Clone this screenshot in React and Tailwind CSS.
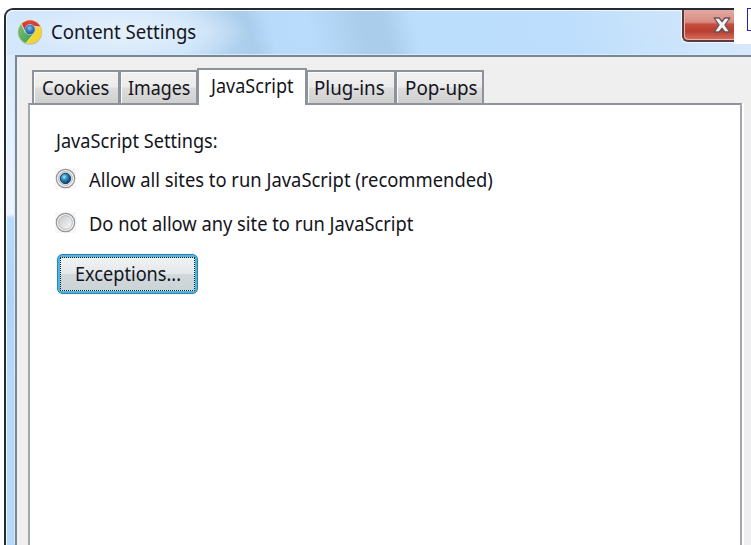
const tabFace = "bg-[linear-gradient(180deg,#f2f2f2_0%,#ebebeb_48%,#dddddd_52%,#cfcfcf_100%)]";

function Text({ children, className }) {
  return <span className={`inline-block origin-left whitespace-nowrap ${className}`}>{children}</span>;
}

function Tab({ children, className, textClass }) {
  return (
    <div className={`flex h-[33px] shrink-0 items-center border-2 border-b-0 border-[#8e929a] shadow-[inset_1px_1px_0_#fafafa] ${tabFace} ${className}`}>
      <Text className={textClass}>{children}</Text>
    </div>
  );
}

function ChromeLogo() {
  return (
    <svg className="block h-[26px] w-[26px] shrink-0" viewBox="0 0 26 26">
      <defs>
        <radialGradient id="blue" cx="0.45" cy="0.35" r="0.65">
          <stop offset="0" stopColor="#8dc2ef" />
          <stop offset="0.5" stopColor="#397fc5" />
          <stop offset="1" stopColor="#21548c" />
        </radialGradient>
        <linearGradient id="red" x1="0" y1="0" x2="0" y2="1">
          <stop offset="0" stopColor="#e5493f" />
          <stop offset="1" stopColor="#c3221d" />
        </linearGradient>
        <linearGradient id="green" x1="0" y1="0" x2="1" y2="1">
          <stop offset="0" stopColor="#7cc17b" />
          <stop offset="1" stopColor="#3c9c45" />
        </linearGradient>
      </defs>
      <circle cx="13" cy="13.5" r="12.2" fill="#8c9a91" opacity="0.55" />
      <circle cx="13" cy="13" r="11.7" fill="#f4d42d" />
      <path d="M4.6 4.9A11.7 11.7 0 0 1 23.6 8L14 7L7.8 12.5Z" fill="url(#red)" />
      <path d="M4.6 4.9A11.7 11.7 0 0 0 9 24L16.6 15L8.4 13Z" fill="url(#green)" />
      <path d="M4.6 4.9L8.4 14M9 24L16.6 15M23.6 8L14 7" stroke="#e9efda" strokeWidth="0.8" fill="none" />
      <circle cx="13" cy="10.5" r="5.4" fill="#b9cde0" />
      <circle cx="13" cy="10.5" r="4.8" fill="url(#blue)" />
    </svg>
  );
}

function CloseButton() {
  return (
    <div className="flex h-[32px] w-[52px] shrink-0 items-center justify-end rounded-bl-[6px] border-b-2 border-l-2 border-[#5d3940] bg-[linear-gradient(180deg,#e3aaa2_0%,#d98c82_40%,#c34e40_48%,#b93d2e_70%,#d5705f_100%)] shadow-[inset_1px_-1px_0_#e9b2a9,-1px_1px_0_#eef6fd]">
      <svg className="mb-[1px] mr-[3px] h-[18px] w-[18px]" viewBox="0 0 18 18">
        <path d="M1.2 2H6.2L9 5.7L11.8 2H16.8L11.9 9L16.8 16H11.8L9 12.3L6.2 16H1.2L6.1 9Z" fill="#f4f4f4" stroke="#65515a" strokeWidth="1.3" strokeLinejoin="round" />
      </svg>
    </div>
  );
}

function Radio({ checked }) {
  return (
    <svg className="-mt-[3px] block h-[21px] w-[21px] shrink-0 bg-[#f7f7f7]" viewBox="0 0 21 21">
      <defs>
        <linearGradient id="well" x1="0" y1="0" x2="1" y2="1">
          <stop offset="0" stopColor="#c6c8ca" />
          <stop offset="1" stopColor="#fafafa" />
        </linearGradient>
        <radialGradient id="dot" cx="0.38" cy="0.35" r="0.65">
          <stop offset="0" stopColor="#b4e6fa" />
          <stop offset="0.4" stopColor="#2f93c9" />
          <stop offset="1" stopColor="#123c62" />
        </radialGradient>
      </defs>
      <circle cx="10.5" cy="10.5" r="9.2" fill="#f6f6f6" stroke="#929496" strokeWidth="1.2" />
      <circle cx="10.5" cy="10.5" r="6.9" fill="url(#well)" stroke="#b5b8bb" strokeWidth="1" />
      {checked && <circle cx="10.5" cy="10.5" r="5.2" fill="url(#dot)" stroke="#173b5c" strokeWidth="0.9" />}
    </svg>
  );
}

export default function App() {
  return (
    <div className="relative h-[545px] w-[751px] overflow-hidden bg-white pl-1 pt-2 font-['Noto_Sans','Open_Sans',sans-serif] text-[19.5px] leading-[24px] text-[#14141c]">
      <div className="flex h-[537px] flex-col rounded-tl-[9px] border-l-2 border-t-2 border-[#252b36] bg-[linear-gradient(180deg,#d3e7fb_0px,#e1effd_100px,#edf5fe_204px,#b9dcfb_208px,#aed4f9_290px,#b5d9fb_370px,#b5d9fb_100%)] shadow-[inset_1px_1px_0_#f5faff]">
        <header className="flex h-[45px] shrink-0 items-start rounded-tl-[7px] bg-[radial-gradient(ellipse_130px_34px_at_115px_22px,#e5f1fc_0%,#dcecfbcc_55%,transparent_100%),linear-gradient(75deg,#d2e7fc_0%,#c5e0fa_24%,#b1d2ef_30%,#a9cdeb_33%,#b8dbfb_36%,#b9dcfc_41%,#a9cdeb_48%,#a9cdeb_51%,#bbdefd_55%,#bddefc_75%,#d2e7fb_95%,#d9eafa_100%)] shadow-[inset_1px_1px_0_#eff8ff]">
          <div className="flex h-[44px] items-center pl-[11px]">
            <ChromeLogo />
            <Text className="ml-[8px] scale-x-[0.952]">Content Settings</Text>
          </div>
          <div className="ml-auto mr-[17px]"><CloseButton /></div>
        </header>
        <main className="ml-[9px] flex flex-1 flex-col border-l-2 border-t-2 border-[#7b8794] bg-[#efefef] shadow-[-1px_-1px_0_#d8eafa]">
          <nav className="flex h-[46px] shrink-0 items-end pl-[15px]">
            <Tab className="w-[88px] pl-[8px]" textClass="scale-x-[0.94]">Cookies</Tab>
            <Tab className="-ml-px w-[79px] pl-[7px]" textClass="scale-x-[0.915]">Images</Tab>
            <div className="relative -mb-[2px] -ml-px flex h-[37px] w-[110px] shrink-0 items-start border-2 border-b-0 border-[#8e929a] bg-white pl-[12px] pt-[4px]">
              <Text className="scale-x-[0.925]">JavaScript</Text>
            </div>
            <Tab className="-ml-px w-[90px] pl-[6px]" textClass="scale-x-[0.96]">Plug-ins</Tab>
            <Tab className="-ml-px w-[89px] pl-[8px]" textClass="scale-x-[0.965]">Pop-ups</Tab>
          </nav>
          <section className="ml-[11px] mr-[9px] flex flex-1 flex-col border-l-2 border-r-2 border-t-2 border-[#a5a7af] border-t-[#8e929a] bg-white pl-[25px] shadow-[2px_0_0_#fff]">
            <div className="mt-[24px] flex h-6 pl-px"><Text className="scale-x-[0.93]">JavaScript Settings:</Text></div>
            <div className="mt-[15px] flex h-6 items-center gap-[13px]">
              <Radio checked />
              <Text className="scale-x-[0.942]">Allow all sites to run JavaScript (recommended)</Text>
            </div>
            <div className="mt-[20px] flex h-6 items-center gap-[13px]">
              <Radio />
              <Text className="scale-x-[0.938]">Do not allow any site to run JavaScript</Text>
            </div>
            <button className="ml-[2px] mt-[18px] flex h-[40px] w-[141px] items-center rounded-[5px] border border-[#3e7ea9] bg-[#43b9e4] p-[2px] outline outline-1 outline-[#f4f4f4]">
              <span className="flex h-full w-full items-center border border-dotted border-[#15181f] bg-[linear-gradient(180deg,#f0f2f3_0%,#e4e8ea_48%,#d2d9dd_52%,#cbd3d6_100%)] pl-[14px]">
                <Text className="scale-x-[0.93]">Exceptions...</Text>
              </span>
            </button>
          </section>
        </main>
      </div>
      <div className="absolute right-0 top-0 h-[44px] w-[17px] bg-white pl-[13px] pt-2">
        <div className="h-[23px] w-[8px] border border-[#2222c8]" />
      </div>
    </div>
  );
}
